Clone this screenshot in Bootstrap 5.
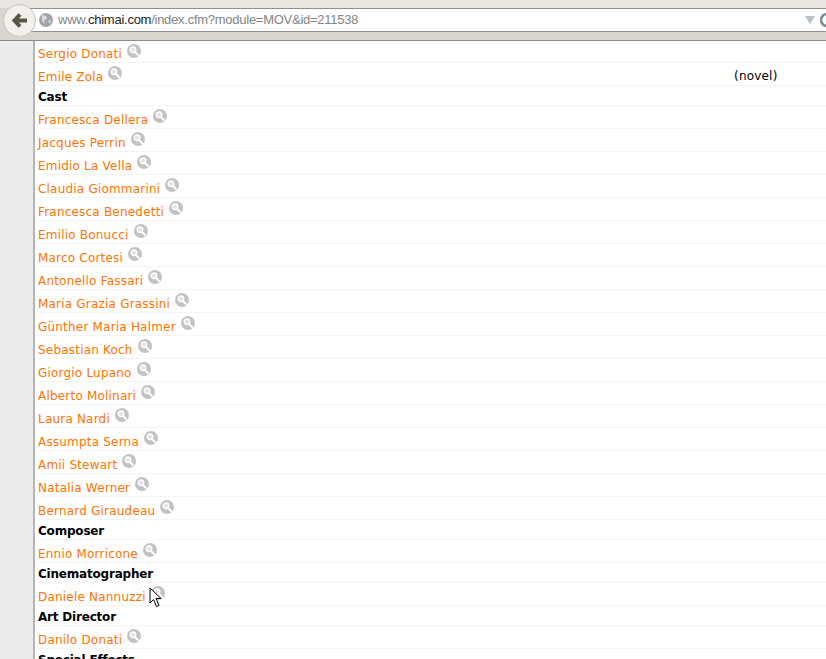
<!DOCTYPE html>
<html lang="en">
<head>
    <meta charset="UTF-8">
    <meta name="viewport" content="width=device-width, initial-scale=1.0">
    <title>Chimai</title>
    <link href="https://cdn.jsdelivr.net/npm/bootstrap@5.3.0/dist/css/bootstrap.min.css" rel="stylesheet">
    <style>
        html, body { height: 659px; overflow: hidden; }
        body { background: #fff; font-family: "DejaVu Sans", Verdana, sans-serif; font-size: 12px; color: #000; }
        .browser-bar { height: 41px; background: linear-gradient(#e9e7e2 0 8px, #d9d6cf 8px); border-bottom: 1px solid #8c8c88; padding: 8px 0 0 20px; position: relative; }
        .url-box { height: 24px; background: #fff; border: 1px solid #8f8f8f; border-right: 0; padding-left: 18px; font-family: "Liberation Sans", Arial, sans-serif; font-size: 13px; letter-spacing: -.26px; line-height: 22px; color: #858585; overflow: hidden; }
        .url-box b { font-weight: normal; color: #222; }
        .back-btn { position: absolute; left: 3px; top: 4px; width: 33px; height: 33px; border-radius: 50%; border: 1px solid #c6c5c0; background: #f1f0ec; }
        .globe { flex: 0 0 14px; margin-right: 1px; }
        .drop-arrow { width: 0; height: 0; border-left: 5px solid transparent; border-right: 5px solid transparent; border-top: 8px solid #b9c0c6; margin-right: 5px; }
        .reload-icon { flex: 0 0 6px; }
        .side-gutter { background: #ebebeb; border-right: 2px solid #b5b5b5; flex: 0 0 35px; }
        .credit-list { flex: 1; margin-left: 3px; }
        .credit-row { height: 23px; border-bottom: 1px solid #f4f4f4; line-height: 15px; }
        .credit-head { height: 20px; padding-top: 4px; font-weight: bold; letter-spacing: -.2px; }
        .credit-first { height: 22px; }
        .credit-name { width: 696px; flex: 0 0 696px; padding-top: 7px; letter-spacing: .2px; }
        .credit-first .credit-name { padding-top: 6px; }
        .credit-name a { color: #ff7300; text-decoration: none; }
        .credit-note { padding-top: 6px; letter-spacing: .2px; }
        .mag { margin-left: 5px; margin-top: -4px; display: block; flex: 0 0 14px; }
        .credit-first .mag { margin-top: -3px; }
        .mouse-arrow { position: absolute; left: 149px; top: 587px; }
    </style>
</head>
<body>
    <svg width="0" height="0" class="d-block">
        <symbol id="mag-icon" viewBox="0 0 14 14">
            <circle cx="7" cy="7" r="7" fill="#c3c3c3"/>
            <circle cx="6" cy="5.800" r="2.800" fill="#e4e4e4" stroke="#fff" stroke-width="1.300"/>
            <path d="M8 8l3 3" stroke="#fff" stroke-width="2" stroke-linecap="round"/>
        </symbol>
    </svg>

    <div class="browser-bar">
        <div class="url-box d-flex align-items-center">
            <svg class="globe" width="14" height="14" viewBox="0 0 14 14"><circle cx="7" cy="7" r="7" fill="#a2a5a8"/><path d="M3 2l4 1 1 3-3 1 1 4-3-3zM9 8l3-1-1 4z" fill="#dcdedf"/></svg>
            <span class="flex-grow-1 ms-1">www.<b>chimai.com</b>/index.cfm?module=MOV&amp;id=211538</span>
            <span class="drop-arrow"></span>
            <svg class="reload-icon" width="6" height="16" viewBox="0 0 6 16"><path d="M7 2a6 6 0 0 0 0 12" fill="none" stroke="#7b8b9b" stroke-width="2.500"/></svg>
        </div>
        <div class="back-btn d-flex align-items-center justify-content-center">
            <svg width="16" height="15" viewBox="0 0 16 15"><path d="M8 1.500L2.500 7.500l5.500 6M3 7.500h12" fill="none" stroke="#5b5646" stroke-width="4"/></svg>
        </div>
    </div>

    <div class="d-flex">
        <div class="side-gutter"></div>
        <div class="credit-list" id="credits"></div>
    </div>

    <svg class="mouse-arrow" width="14" height="21" viewBox="0 0 14 21"><path d="M1 1v15l3.500-3.500 3 7 2.500-1-3-7h5z" fill="#fff" stroke="#000"/></svg>

    <script>
        // # marks a heading row, | splits off the note column
        var rows = ["Sergio Donati", "Emile Zola|(novel)", "#Cast", "Francesca Dellera", "Jacques Perrin", "Emidio La Vella",
            "Claudia Giommarini", "Francesca Benedetti", "Emilio Bonucci", "Marco Cortesi", "Antonello Fassari",
            "Maria Grazia Grassini", "Günther Maria Halmer", "Sebastian Koch", "Giorgio Lupano", "Alberto Molinari",
            "Laura Nardi", "Assumpta Serna", "Amii Stewart", "Natalia Werner", "Bernard Giraudeau", "#Composer",
            "Ennio Morricone", "#Cinematographer", "Daniele Nannuzzi", "#Art Director", "Danilo Donati", "#Special Effects"];
        var html = "";
        rows.forEach(function(r, i) {
            if (r[0] == "#") {
                html += '<div class="credit-row credit-head">' + r.slice(1) + '</div>';
            } else {
                var p = r.split("|");
                html += '<div class="credit-row d-flex' + (i == 0 ? ' credit-first' : '') + '"><div class="credit-name d-flex align-items-start"><a href="#">' + p[0] + '</a>' +
                    '<svg class="mag" width="14" height="14"><use href="#mag-icon"/></svg></div>' +
                    (p[1] ? '<div class="credit-note">' + p[1] + '</div>' : '') + '</div>';
            }
        });
        document.getElementById("credits").innerHTML = html;
    </script>
    <script src="https://cdn.jsdelivr.net/npm/bootstrap@5.3.0/dist/js/bootstrap.bundle.min.js"></script>
</body>
</html>
